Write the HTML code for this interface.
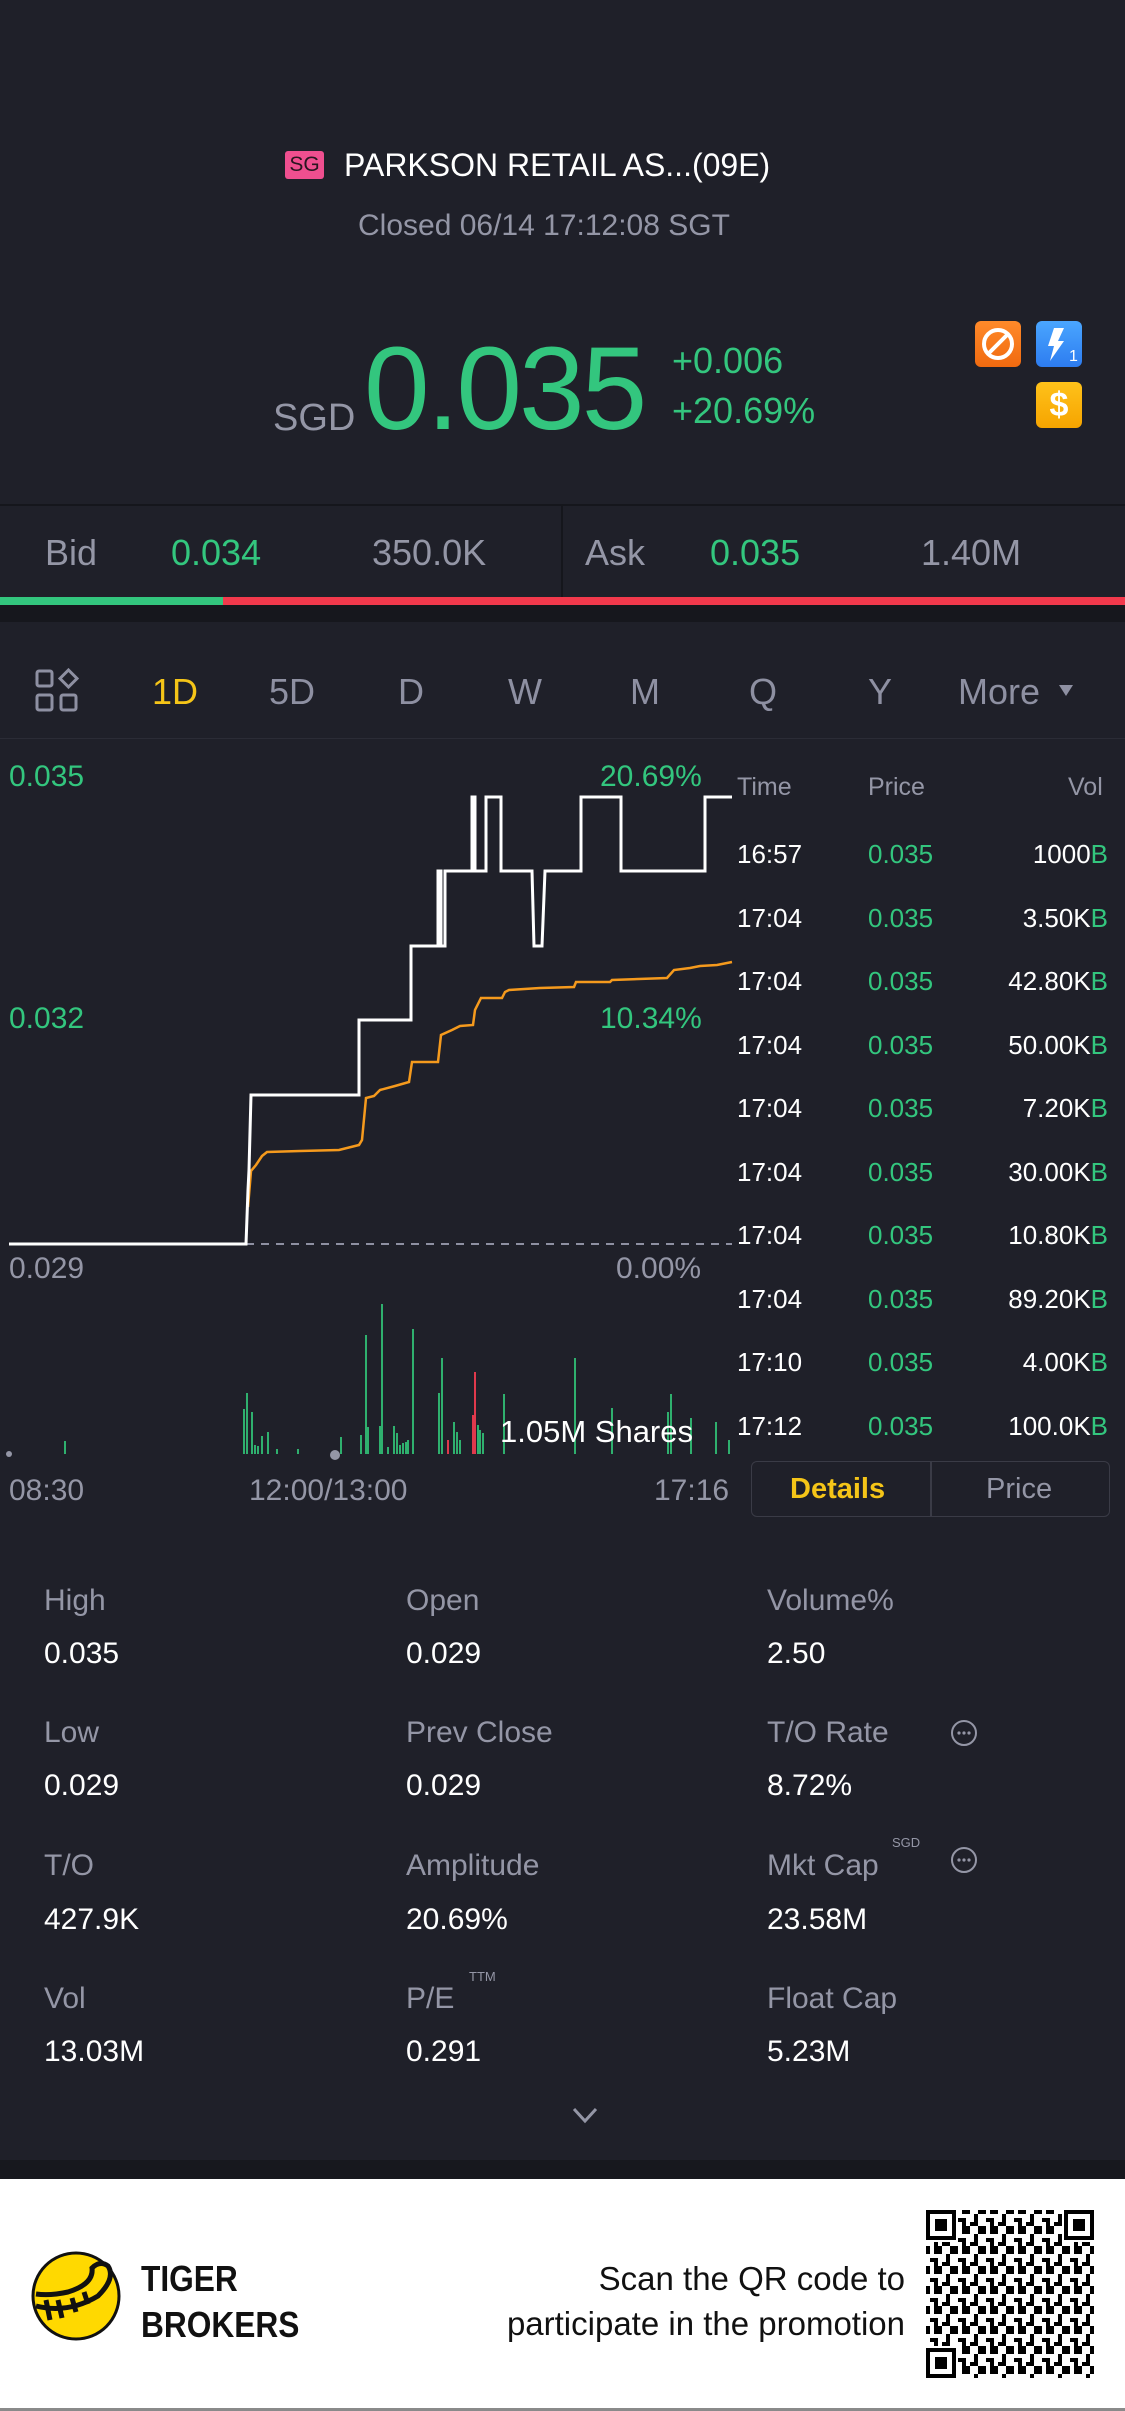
<!DOCTYPE html>
<html><head><meta charset="utf-8">
<style>
*{margin:0;padding:0;box-sizing:border-box}
body{width:1125px;height:2411px;background:#1f2029;font-family:"Liberation Sans",sans-serif;position:relative;overflow:hidden;color:#fff}
.a{position:absolute;white-space:nowrap;line-height:1}
.g{color:#33c67e}
.gr{color:#9496a6}
.lab{font-size:30px;color:#9496a6}
.val{font-size:30px;color:#fff}
.tab{font-size:36px;color:#8e90a2;top:674px}
.tr{font-size:25px;}
</style></head><body>

<!-- header -->
<div class="a" style="left:285px;top:151px;width:39px;height:28px;background:#ef4f8f;border-radius:3px;color:#2a1620;font-size:21px;text-align:center;line-height:28px">SG</div>
<div class="a" style="left:344px;top:149px;font-size:32px;color:#fff">PARKSON RETAIL AS...(09E)</div>
<div class="a" style="left:358px;top:211px;font-size:30px;color:#9496a6">Closed 06/14 17:12:08 SGT</div>

<div class="a" style="left:273px;top:399px;font-size:38px;color:#9496a6">SGD</div>
<div class="a g" style="left:364px;top:330px;font-size:118px;letter-spacing:-3px">0.035</div>
<div class="a g" style="left:672px;top:343px;font-size:36px">+0.006</div>
<div class="a g" style="left:672px;top:393px;font-size:36px">+20.69%</div>

<div class="a" style="left:975px;top:321px;width:46px;height:46px;border-radius:6px;background:linear-gradient(#ff8a2a,#f06a10)">
<svg width="46" height="46"><circle cx="23" cy="23" r="14" fill="none" stroke="#fff" stroke-width="4"/><line x1="13" y1="33" x2="33" y2="13" stroke="#fff" stroke-width="4"/></svg></div>
<div class="a" style="left:1036px;top:321px;width:46px;height:46px;border-radius:6px;background:linear-gradient(#4aa6ff,#2d7cf0)">
<svg width="46" height="46"><path d="M18 7 L28 7 L22 20 L28 20 L14 40 L18 25 L12 25 Z" fill="#fff"/><text x="33" y="40" font-size="16" fill="#fff" font-family="Liberation Sans">1</text></svg></div>
<div class="a" style="left:1036px;top:382px;width:46px;height:46px;border-radius:6px;background:linear-gradient(#ffc21a,#f6a400)">
<div style="color:#fff;font-size:34px;font-weight:bold;text-align:center;line-height:46px">$</div></div>

<!-- bid ask -->
<div class="a" style="left:0;top:504px;width:1125px;height:2px;background:#15161c"></div>
<div class="a" style="left:561px;top:506px;width:2px;height:92px;background:#15161c"></div>
<div class="a gr" style="left:45px;top:535px;font-size:36px">Bid</div>
<div class="a g" style="left:171px;top:535px;font-size:36px">0.034</div>
<div class="a gr" style="left:372px;top:535px;font-size:36px">350.0K</div>
<div class="a gr" style="left:585px;top:535px;font-size:36px">Ask</div>
<div class="a g" style="left:710px;top:535px;font-size:36px">0.035</div>
<div class="a gr" style="left:921px;top:535px;font-size:36px">1.40M</div>
<div class="a" style="left:0;top:597px;width:223px;height:8px;background:#33c67e"></div>
<div class="a" style="left:223px;top:597px;width:902px;height:8px;background:#f2394c"></div>
<div class="a" style="left:0;top:605px;width:1125px;height:17px;background:#16171d"></div>

<!-- tabs -->
<svg class="a" style="left:34px;top:668px" width="48" height="48"><g fill="none" stroke="#8e90a2" stroke-width="3"><rect x="3" y="3" width="15" height="15" rx="2"/><rect x="3" y="27" width="15" height="15" rx="2"/><rect x="27" y="27" width="15" height="15" rx="2"/><path d="M34.5 2 L43 10.5 L34.5 19 L26 10.5Z"/></g></svg>
<div class="a tab" style="left:152px;color:#f5c518">1D</div>
<div class="a tab" style="left:269px">5D</div>
<div class="a tab" style="left:398px">D</div>
<div class="a tab" style="left:508px">W</div>
<div class="a tab" style="left:630px">M</div>
<div class="a tab" style="left:749px">Q</div>
<div class="a tab" style="left:868px">Y</div>
<div class="a tab" style="left:958px">More</div>
<svg class="a" style="left:1058px;top:684px" width="16" height="14"><path d="M1 1 L15 1 L8 12Z" fill="#8e90a2"/></svg>
<div class="a" style="left:0;top:738px;width:1125px;height:1px;background:#2b2c36"></div>

<!-- chart -->
<svg class="a" style="left:0;top:0" width="740" height="1470">
<line x1="246" y1="1244" x2="732" y2="1244" stroke="#8e90a2" stroke-width="2" stroke-dasharray="8,7"/>
<polyline fill="none" stroke="#f59a1d" stroke-width="2.5" points="248,1207 251,1171 256,1165 262,1156 267,1152 300,1151 339,1150 359,1145 362,1140 366,1098 374,1096 380,1090 395,1086 409,1082 412,1062 438,1062 441,1035 452,1030 460,1026 473,1025 475,1010 481,998 502,998 505,992 509,990 540,988 574,987 576,982 610,982 612,980 667,978 674,970 690,968 700,966 717,965 732,962"/>
<polyline fill="none" stroke="#fff" stroke-width="3" points="9,1244 246,1244 248,1190 249,1170 251,1095 359,1095 359,1020 411,1020 411,946 438,946 438,871 441,871 441,946 445,946 445,871 472,871 472,797 475,797 475,871 486,871 486,797 501,797 501,871 532,871 534,946 542,946 545,871 581,871 581,797 621,797 621,871 705,871 705,797 732,797"/>
<g stroke-width="2">
<g stroke="#2fb06e">
<line x1="65" y1="1454" x2="65" y2="1441"/><line x1="244" y1="1454" x2="244" y2="1409"/><line x1="247" y1="1454" x2="247" y2="1393"/><line x1="252" y1="1454" x2="252" y2="1412"/><line x1="255" y1="1454" x2="255" y2="1445"/><line x1="258" y1="1454" x2="258" y2="1446"/><line x1="262" y1="1454" x2="262" y2="1436"/><line x1="268" y1="1454" x2="268" y2="1432"/><line x1="277" y1="1454" x2="277" y2="1449"/><line x1="298" y1="1454" x2="298" y2="1449"/>
<line x1="341" y1="1454" x2="341" y2="1437"/><line x1="361" y1="1454" x2="361" y2="1435"/><line x1="366" y1="1454" x2="366" y2="1335"/><line x1="368" y1="1454" x2="368" y2="1427"/><line x1="380" y1="1454" x2="380" y2="1426"/><line x1="382" y1="1454" x2="382" y2="1304"/><line x1="388" y1="1454" x2="388" y2="1447"/><line x1="394" y1="1454" x2="394" y2="1426"/><line x1="397" y1="1454" x2="397" y2="1433"/><line x1="400" y1="1454" x2="400" y2="1445"/><line x1="403" y1="1454" x2="403" y2="1443"/><line x1="406" y1="1454" x2="406" y2="1442"/><line x1="408" y1="1454" x2="408" y2="1440"/><line x1="413" y1="1454" x2="413" y2="1329"/>
<line x1="439" y1="1454" x2="439" y2="1393"/><line x1="442" y1="1454" x2="442" y2="1358"/><line x1="454" y1="1454" x2="454" y2="1422"/><line x1="457" y1="1454" x2="457" y2="1432"/><line x1="460" y1="1454" x2="460" y2="1440"/><line x1="478" y1="1454" x2="478" y2="1425"/><line x1="480" y1="1454" x2="480" y2="1430"/><line x1="483" y1="1454" x2="483" y2="1433"/>
<line x1="504" y1="1454" x2="504" y2="1394"/><line x1="575" y1="1454" x2="575" y2="1358"/><line x1="612" y1="1454" x2="612" y2="1408"/><line x1="668" y1="1454" x2="668" y2="1412"/><line x1="671" y1="1454" x2="671" y2="1394"/><line x1="691" y1="1454" x2="691" y2="1418"/><line x1="716" y1="1454" x2="716" y2="1422"/><line x1="729" y1="1454" x2="729" y2="1440"/>
</g>
<g stroke="#e0394c"><line x1="448" y1="1454" x2="448" y2="1440"/><line x1="475" y1="1454" x2="475" y2="1372"/><line x1="473" y1="1454" x2="473" y2="1415"/></g>
</g>
<circle cx="335" cy="1455" r="5" fill="#9496a6"/>
<circle cx="9" cy="1454" r="3" fill="#9496a6"/>
</svg>
<div class="a g" style="left:9px;top:762px;font-size:30px">0.035</div>
<div class="a g" style="left:600px;top:762px;font-size:30px">20.69%</div>
<div class="a g" style="left:9px;top:1004px;font-size:30px">0.032</div>
<div class="a g" style="left:600px;top:1004px;font-size:30px">10.34%</div>
<div class="a gr" style="left:9px;top:1254px;font-size:30px">0.029</div>
<div class="a gr" style="left:616px;top:1254px;font-size:30px">0.00%</div>
<div class="a" style="left:500px;top:1416px;font-size:31px;color:#fff">1.05M Shares</div>
<div class="a gr" style="left:9px;top:1476px;font-size:30px">08:30</div>
<div class="a gr" style="left:249px;top:1476px;font-size:30px">12:00/13:00</div>
<div class="a gr" style="left:654px;top:1476px;font-size:30px">17:16</div>

<!-- trade table -->
<div class="a gr tr" style="left:737px;top:775px">Time</div>
<div class="a gr tr" style="left:868px;top:775px">Price</div>
<div class="a gr tr" style="left:1068px;top:775px">Vol</div>
<div class="a" style="left:737px;top:823px;line-height:63.5px;font-size:26px;color:#fff;white-space:pre">16:57
17:04
17:04
17:04
17:04
17:04
17:04
17:04
17:10
17:12</div>
<div class="a g" style="left:868px;top:823px;line-height:63.5px;font-size:26px;white-space:pre">0.035
0.035
0.035
0.035
0.035
0.035
0.035
0.035
0.035
0.035</div>
<div class="a" style="right:17px;top:823px;line-height:63.5px;font-size:26px;color:#fff;text-align:right;white-space:pre">1000<span class="g">B</span>
3.50K<span class="g">B</span>
42.80K<span class="g">B</span>
50.00K<span class="g">B</span>
7.20K<span class="g">B</span>
30.00K<span class="g">B</span>
10.80K<span class="g">B</span>
89.20K<span class="g">B</span>
4.00K<span class="g">B</span>
100.0K<span class="g">B</span></div>

<div class="a" style="left:751px;top:1461px;width:359px;height:56px;border:1.5px solid #3a3b46;border-radius:6px"></div>
<div class="a" style="left:930px;top:1462px;width:1.5px;height:54px;background:#3a3b46"></div>
<div class="a" style="left:790px;top:1475px;font-size:29px;color:#f5c518;font-weight:bold">Details</div>
<div class="a gr" style="left:986px;top:1475px;font-size:29px">Price</div>

<!-- stats -->
<div class="a lab" style="left:44px;top:1586px">High</div><div class="a val" style="left:44px;top:1639px">0.035</div>
<div class="a lab" style="left:406px;top:1586px">Open</div><div class="a val" style="left:406px;top:1639px">0.029</div>
<div class="a lab" style="left:767px;top:1586px">Volume%</div><div class="a val" style="left:767px;top:1639px">2.50</div>
<div class="a lab" style="left:44px;top:1718px">Low</div><div class="a val" style="left:44px;top:1771px">0.029</div>
<div class="a lab" style="left:406px;top:1718px">Prev Close</div><div class="a val" style="left:406px;top:1771px">0.029</div>
<div class="a lab" style="left:767px;top:1718px">T/O Rate</div><div class="a val" style="left:767px;top:1771px">8.72%</div>
<div class="a lab" style="left:44px;top:1851px">T/O</div><div class="a val" style="left:44px;top:1905px">427.9K</div>
<div class="a lab" style="left:406px;top:1851px">Amplitude</div><div class="a val" style="left:406px;top:1905px">20.69%</div>
<div class="a lab" style="left:767px;top:1851px">Mkt Cap</div><div class="a val" style="left:767px;top:1905px">23.58M</div>
<div class="a" style="left:892px;top:1836px;font-size:13px;color:#9496a6">SGD</div>
<div class="a lab" style="left:44px;top:1984px">Vol</div><div class="a val" style="left:44px;top:2037px">13.03M</div>
<div class="a lab" style="left:406px;top:1984px">P/E</div><div class="a val" style="left:406px;top:2037px">0.291</div>
<div class="a" style="left:469px;top:1970px;font-size:13px;color:#9496a6">TTM</div>
<div class="a lab" style="left:767px;top:1984px">Float Cap</div><div class="a val" style="left:767px;top:2037px">5.23M</div>
<svg class="a" style="left:950px;top:1719px" width="28" height="28"><circle cx="14" cy="14" r="12" fill="none" stroke="#9496a6" stroke-width="2"/><g fill="#9496a6"><circle cx="9" cy="14" r="1.6"/><circle cx="14" cy="14" r="1.6"/><circle cx="19" cy="14" r="1.6"/></g></svg>
<svg class="a" style="left:950px;top:1846px" width="28" height="28"><circle cx="14" cy="14" r="12" fill="none" stroke="#9496a6" stroke-width="2"/><g fill="#9496a6"><circle cx="9" cy="14" r="1.6"/><circle cx="14" cy="14" r="1.6"/><circle cx="19" cy="14" r="1.6"/></g></svg>
<svg class="a" style="left:571px;top:2106px" width="28" height="20"><path d="M3 3 L14 15 L25 3" fill="none" stroke="#9496a6" stroke-width="3"/></svg>

<!-- footer -->
<div class="a" style="left:0;top:2160px;width:1125px;height:19px;background:#17181e"></div>
<div class="a" style="left:0;top:2179px;width:1125px;height:229px;background:#fff"></div>
<div class="a" style="left:0;top:2408px;width:1125px;height:3px;background:#8a8a8a"></div>
<svg class="a" style="left:28px;top:2248px" width="96" height="96"><circle cx="48" cy="48" r="43" fill="#ffd900" stroke="#111" stroke-width="3"/><path d="M8 58 Q40 66 70 48 Q88 30 80 18 Q72 12 64 20 Q66 36 40 44 Q22 48 8 46" fill="#ffd900" stroke="#111" stroke-width="5"/><g stroke="#111" stroke-width="5"><line x1="18" y1="52" x2="22" y2="72"/><line x1="30" y1="52" x2="34" y2="70"/><line x1="44" y1="50" x2="48" y2="64"/><line x1="56" y1="44" x2="60" y2="56"/></g></svg>
<div class="a" style="left:141px;top:2256px;font-size:36px;color:#111;line-height:46px;white-space:pre;font-weight:bold;transform:scaleX(0.88);transform-origin:left">TIGER
BROKERS</div>
<div class="a" style="right:220px;top:2256px;font-size:33px;color:#111;line-height:45px;text-align:right;white-space:pre">Scan the QR code to
participate in the promotion</div>
<svg class="a" style="left:926px;top:2210px" width="168" height="168" shape-rendering="crispEdges">
<defs><pattern id="q" width="28" height="20" patternUnits="userSpaceOnUse"><g fill="#000"><rect x="0" y="0" width="4" height="4"/><rect x="8" y="0" width="8" height="4"/><rect x="20" y="4" width="4" height="8"/><rect x="4" y="8" width="8" height="4"/><rect x="16" y="12" width="8" height="4"/><rect x="0" y="16" width="4" height="4"/><rect x="12" y="16" width="4" height="4"/><rect x="24" y="0" width="4" height="4"/><rect x="8" y="12" width="4" height="8"/><rect x="24" y="16" width="4" height="4"/></g></pattern></defs>
<rect width="168" height="168" fill="url(#q)"/>
<g><rect x="0" y="0" width="32" height="32" fill="#fff"/><rect x="2" y="2" width="26" height="26" fill="none" stroke="#000" stroke-width="4"/><rect x="9" y="9" width="12" height="12"/>
<rect x="136" y="0" width="32" height="32" fill="#fff"/><rect x="140" y="2" width="26" height="26" fill="none" stroke="#000" stroke-width="4"/><rect x="147" y="9" width="12" height="12"/>
<rect x="0" y="136" width="32" height="32" fill="#fff"/><rect x="2" y="140" width="26" height="26" fill="none" stroke="#000" stroke-width="4"/><rect x="9" y="147" width="12" height="12"/></g>
</svg>
</body></html>
